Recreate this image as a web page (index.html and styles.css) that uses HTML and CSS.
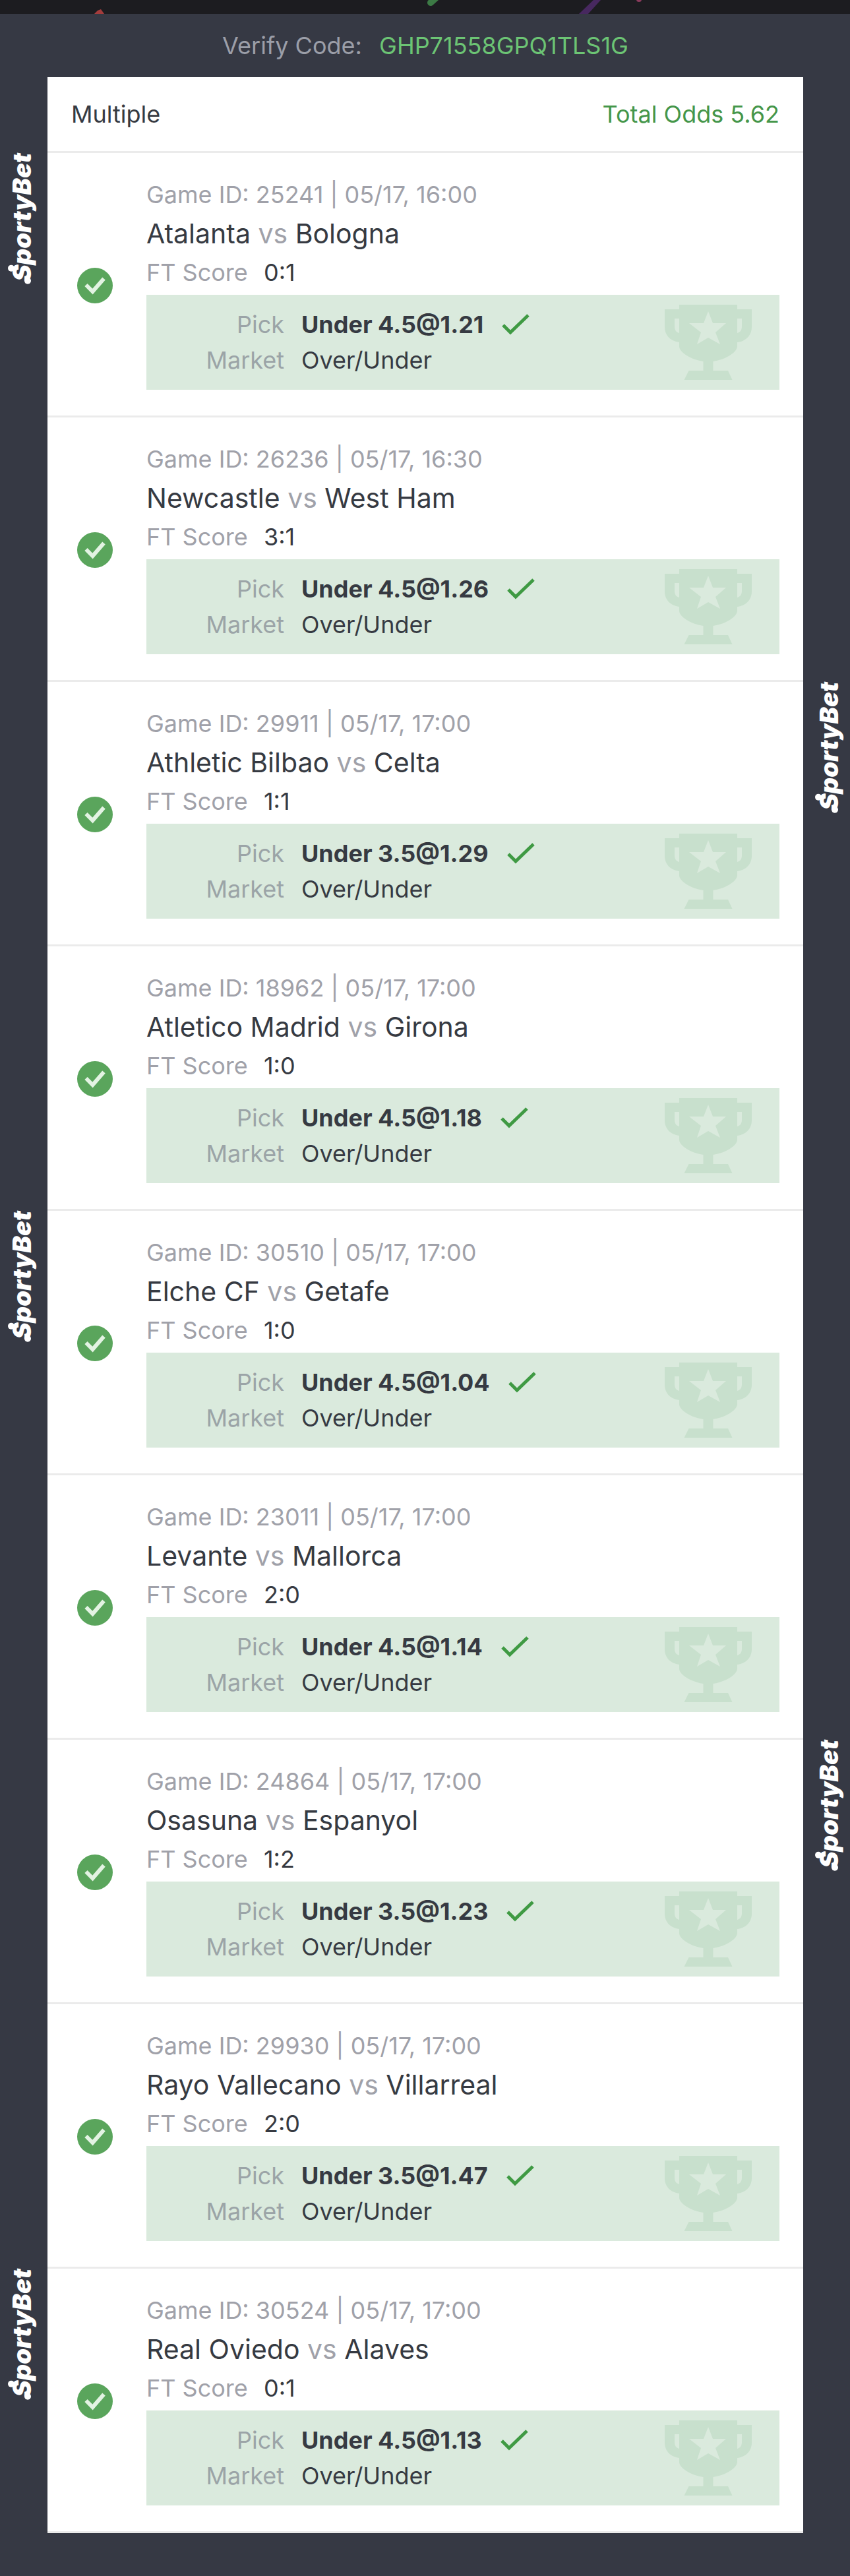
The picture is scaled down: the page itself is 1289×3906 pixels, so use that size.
FILE: index.html
```
<!DOCTYPE html>
<html lang="en">
<head>
    <meta charset="UTF-8">
    <meta name="viewport" content="width=device-width, initial-scale=1.0">
    <title>SportyBet - Ticket</title>
    <link rel="stylesheet" href="styles.css">
</head>
<body>
    <!-- Shared icons -->
    <svg class="sprite" aria-hidden="true">
        <symbol id="won" viewBox="0 0 54 54">
            <circle cx="27" cy="27" r="27" fill="#5aa55c"/>
            <path d="M13.500 26L23.500 36L40.500 16.500" fill="none" stroke="#e3f3e3" stroke-width="6"/>
        </symbol>
        <symbol id="tick" viewBox="0 0 42 32">
            <path d="M2 17L13 28L40 2" fill="none" stroke="#3f9a43" stroke-width="5"/>
        </symbol>
        <symbol id="trophy" viewBox="0 0 132 114">
            <path fill="#c8e0cd" fill-rule="evenodd" d="M22 0H110V7H132V34C132 47 122 56 110 57V63C110 72 93 83 73.500 86V100H96L102.500 114H29.500L36.500 100H58.500V86C39 83 22 72 22 63V57C10 56 0 47 0 34V7H22ZM22 21H15V33C15 39 18 42 22 43ZM110 21V43C114 42 117 39 117 33V21ZM66 10L59 28H37L55 42L49 60L66 50L84 60L77 42L93 28H73Z"/>
        </symbol>
    </svg>

    <div class="banner">
        <svg viewBox="0 0 1289 21" preserveAspectRatio="none" aria-hidden="true">
            <path d="M143 21L148 16L153 14L158 21Z" fill="#a33c3c"/>
            <path d="M653 4L662 -4" stroke="#3c7a45" stroke-width="10" stroke-linecap="round"/>
            <path d="M900 0H911L892 21H878Z" fill="#47285f"/>
            <circle cx="969" cy="-1" r="4" fill="#8a3a5c"/>
        </svg>
    </div>

    <main class="ticket">
        <p class="verify">Verify Code: <span class="code">GHP71558GPQ1TLS1G</span></p>
        <section class="card">
            <header class="card-header">
                <h1>Multiple</h1>
                <span class="total-odds">Total Odds 5.62</span>
            </header>
            <ul class="games">
                <li class="game">
                    <span class="brand brand-left">SportyBet</span>
                    <svg class="won"><use href="#won"/></svg>
                    <div class="details">
                        <p class="meta">Game ID: 25241 | 05/17, 16:00</p>
                        <h2>Atalanta <span>vs</span> Bologna</h2>
                        <p class="score">FT Score <span>0:1</span></p>
                        <dl class="bet">
                            <dt>Pick</dt>
                            <dd class="pick">Under 4.5@1.21 <svg class="tick"><use href="#tick"/></svg></dd>
                            <dt>Market</dt>
                            <dd>Over/Under</dd>
                        </dl>
                        <svg class="trophy"><use href="#trophy"/></svg>
                    </div>
                </li>
                <li class="game">
                    <svg class="won"><use href="#won"/></svg>
                    <div class="details">
                        <p class="meta">Game ID: 26236 | 05/17, 16:30</p>
                        <h2>Newcastle <span>vs</span> West Ham</h2>
                        <p class="score">FT Score <span>3:1</span></p>
                        <dl class="bet">
                            <dt>Pick</dt>
                            <dd class="pick">Under 4.5@1.26 <svg class="tick"><use href="#tick"/></svg></dd>
                            <dt>Market</dt>
                            <dd>Over/Under</dd>
                        </dl>
                        <svg class="trophy"><use href="#trophy"/></svg>
                    </div>
                </li>
                <li class="game">
                    <span class="brand brand-right">SportyBet</span>
                    <svg class="won"><use href="#won"/></svg>
                    <div class="details">
                        <p class="meta">Game ID: 29911 | 05/17, 17:00</p>
                        <h2>Athletic Bilbao <span>vs</span> Celta</h2>
                        <p class="score">FT Score <span>1:1</span></p>
                        <dl class="bet">
                            <dt>Pick</dt>
                            <dd class="pick">Under 3.5@1.29 <svg class="tick"><use href="#tick"/></svg></dd>
                            <dt>Market</dt>
                            <dd>Over/Under</dd>
                        </dl>
                        <svg class="trophy"><use href="#trophy"/></svg>
                    </div>
                </li>
                <li class="game">
                    <svg class="won"><use href="#won"/></svg>
                    <div class="details">
                        <p class="meta">Game ID: 18962 | 05/17, 17:00</p>
                        <h2>Atletico Madrid <span>vs</span> Girona</h2>
                        <p class="score">FT Score <span>1:0</span></p>
                        <dl class="bet">
                            <dt>Pick</dt>
                            <dd class="pick">Under 4.5@1.18 <svg class="tick"><use href="#tick"/></svg></dd>
                            <dt>Market</dt>
                            <dd>Over/Under</dd>
                        </dl>
                        <svg class="trophy"><use href="#trophy"/></svg>
                    </div>
                </li>
                <li class="game">
                    <span class="brand brand-left">SportyBet</span>
                    <svg class="won"><use href="#won"/></svg>
                    <div class="details">
                        <p class="meta">Game ID: 30510 | 05/17, 17:00</p>
                        <h2>Elche CF <span>vs</span> Getafe</h2>
                        <p class="score">FT Score <span>1:0</span></p>
                        <dl class="bet">
                            <dt>Pick</dt>
                            <dd class="pick">Under 4.5@1.04 <svg class="tick"><use href="#tick"/></svg></dd>
                            <dt>Market</dt>
                            <dd>Over/Under</dd>
                        </dl>
                        <svg class="trophy"><use href="#trophy"/></svg>
                    </div>
                </li>
                <li class="game">
                    <svg class="won"><use href="#won"/></svg>
                    <div class="details">
                        <p class="meta">Game ID: 23011 | 05/17, 17:00</p>
                        <h2>Levante <span>vs</span> Mallorca</h2>
                        <p class="score">FT Score <span>2:0</span></p>
                        <dl class="bet">
                            <dt>Pick</dt>
                            <dd class="pick">Under 4.5@1.14 <svg class="tick"><use href="#tick"/></svg></dd>
                            <dt>Market</dt>
                            <dd>Over/Under</dd>
                        </dl>
                        <svg class="trophy"><use href="#trophy"/></svg>
                    </div>
                </li>
                <li class="game">
                    <span class="brand brand-right">SportyBet</span>
                    <svg class="won"><use href="#won"/></svg>
                    <div class="details">
                        <p class="meta">Game ID: 24864 | 05/17, 17:00</p>
                        <h2>Osasuna <span>vs</span> Espanyol</h2>
                        <p class="score">FT Score <span>1:2</span></p>
                        <dl class="bet">
                            <dt>Pick</dt>
                            <dd class="pick">Under 3.5@1.23 <svg class="tick"><use href="#tick"/></svg></dd>
                            <dt>Market</dt>
                            <dd>Over/Under</dd>
                        </dl>
                        <svg class="trophy"><use href="#trophy"/></svg>
                    </div>
                </li>
                <li class="game">
                    <svg class="won"><use href="#won"/></svg>
                    <div class="details">
                        <p class="meta">Game ID: 29930 | 05/17, 17:00</p>
                        <h2>Rayo Vallecano <span>vs</span> Villarreal</h2>
                        <p class="score">FT Score <span>2:0</span></p>
                        <dl class="bet">
                            <dt>Pick</dt>
                            <dd class="pick">Under 3.5@1.47 <svg class="tick"><use href="#tick"/></svg></dd>
                            <dt>Market</dt>
                            <dd>Over/Under</dd>
                        </dl>
                        <svg class="trophy"><use href="#trophy"/></svg>
                    </div>
                </li>
                <li class="game">
                    <span class="brand brand-left">SportyBet</span>
                    <svg class="won"><use href="#won"/></svg>
                    <div class="details">
                        <p class="meta">Game ID: 30524 | 05/17, 17:00</p>
                        <h2>Real Oviedo <span>vs</span> Alaves</h2>
                        <p class="score">FT Score <span>0:1</span></p>
                        <dl class="bet">
                            <dt>Pick</dt>
                            <dd class="pick">Under 4.5@1.13 <svg class="tick"><use href="#tick"/></svg></dd>
                            <dt>Market</dt>
                            <dd>Over/Under</dd>
                        </dl>
                        <svg class="trophy"><use href="#trophy"/></svg>
                    </div>
                </li>
            </ul>
        </section>
    </main>
</body>
</html>
```
FILE: styles.css
```
* {
    box-sizing: border-box;
}
body {
    font-family: Inter, 'Liberation Sans', sans-serif;
    font-size: 36px;
    background-color: #363944;
    margin: 0;
    color: #363a42;
}
h1, h2, p, ul, dl, dd {
    margin: 0;
    padding: 0;
    font-weight: 400;
}
svg {
    display: block;
}
.sprite {
    display: none;
}
.banner {
    height: 21px;
    background-color: #1c1c20;
}
.banner svg {
    width: 100%;
    height: 100%;
}
.ticket {
    padding: 0 71px 65px 72px;
}
.verify {
    line-height: 96px;
    text-align: center;
    color: #9b9ea8;
}
.code {
    margin-left: 16px;
    color: #6cc474;
}
.card {
    background-color: #fff;
}
.card-header {
    display: flex;
    justify-content: space-between;
    padding: 0 36px;
    line-height: 112px;
    border-bottom: 3px solid #ebebeb;
}
.card-header h1 {
    font-size: 36px;
}
.total-odds {
    color: #45964a;
}
.games {
    list-style: none;
}
.game {
    position: relative;
    display: flex;
    padding: 36px 36px 39px 45px;
    border-bottom: 3px solid #ebebeb;
}
.won {
    width: 54px;
    height: 54px;
    margin: 138px 51px 0 0;
}
.details {
    position: relative;
    flex: 1;
}
.meta {
    line-height: 54px;
    color: #a0a1a9;
}
.details h2 {
    font-size: 41px;
    line-height: 64px;
}
.details h2 span, .score {
    color: #a0a1a9;
}
.score {
    line-height: 54px;
}
.score span {
    margin-left: 14px;
    color: #363a42;
}
.bet {
    display: grid;
    grid-template-columns: 209px 1fr;
    column-gap: 26px;
    margin-top: 7px;
    padding: 18px 0;
    line-height: 54px;
    background-color: #daeadd;
}
.bet dt {
    text-align: right;
    color: #9ba4a7;
}
.pick {
    display: flex;
    align-items: center;
    gap: 28px;
    font-weight: 700;
}
.tick {
    width: 42px;
    height: 32px;
}
.trophy {
    position: absolute;
    right: 42px;
    bottom: 15px;
    width: 132px;
    height: 114px;
}
/* Brand name running up the page edge */
.brand {
    position: absolute;
    top: 0;
    padding-top: 4px;
    writing-mode: vertical-rl;
    transform: rotate(180deg);
    font: italic 900 38px/50px Inter, sans-serif;
    color: #fff;
}
.brand-left {
    left: -64px;
}
.brand-right {
    right: -64px;
}
.brand::before, .brand::after {
    content: "";
    position: absolute;
    width: 10px;
    height: 10px;
    border-radius: 50%;
    background-color: #fff;
}
.brand::before {
    top: 19px;
    right: 4px;
}
.brand::after {
    top: 0;
    left: 11px;
}
```
